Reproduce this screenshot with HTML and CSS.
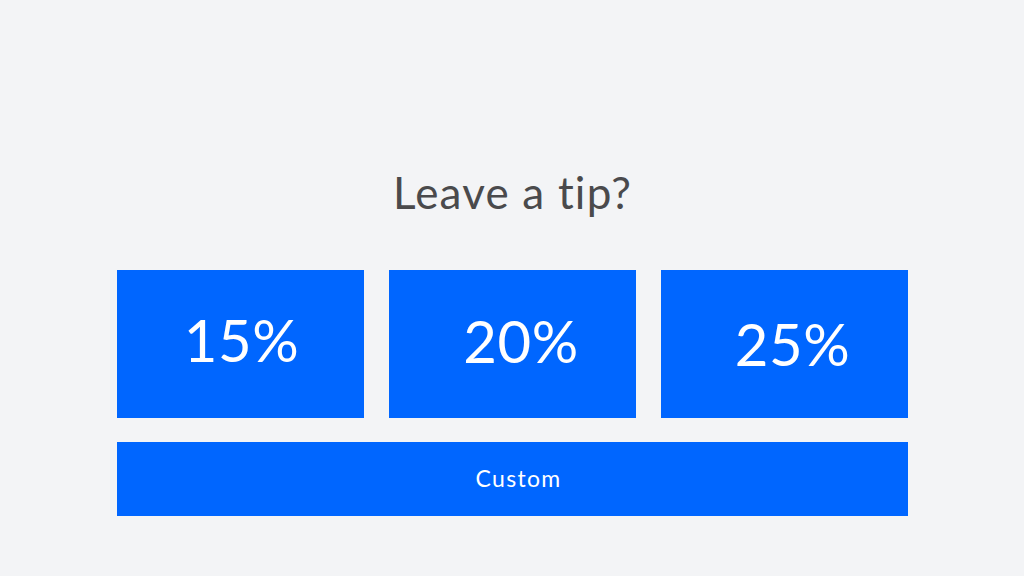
FILE: index.html
```html
<!DOCTYPE html>
<html lang="en">
<head>
<meta charset="utf-8">
<title>Leave a tip?</title>
<link rel="stylesheet" href="styles.css">
</head>
<body>
<main class="tip-panel">
  <h1 class="tip-title">Leave a tip?</h1>
  <div class="tip-grid">
    <button class="tip-btn tip-btn--a">15%</button>
    <button class="tip-btn tip-btn--b">20%</button>
    <button class="tip-btn tip-btn--c">25%</button>
  </div>
  <button class="custom-btn">Custom</button>
</main>
</body>
</html>
```

FILE: styles.css
```css
html, body {
  margin: 0;
  padding: 0;
  background: #f3f4f6;
  width: 1024px;
  height: 576px;
  overflow: hidden;
}

.tip-panel {
  width: 791px;
  margin-left: 117px;
  padding-top: 164px;
  display: flex;
  flex-direction: column;
  font-family: "Lato", "Noto Sans", sans-serif;
}

.tip-title {
  margin: 0;
  text-align: center;
  font-weight: 400;
  font-size: 44px;
  line-height: 56px;
  color: #4a4a4c;
  letter-spacing: 1.2px;
}

.tip-grid {
  margin-top: 50px;
  display: grid;
  grid-template-columns: repeat(3, 247px);
  column-gap: 25px;
}

.tip-btn,
.custom-btn {
  border: none;
  background: #0066ff;
  color: #ffffff;
  font-family: "Lato", "Noto Sans", sans-serif;
  padding: 0;
  display: flex;
  align-items: center;
  justify-content: center;
}

.tip-btn {
  height: 148px;
  font-size: 58px;
  font-weight: 400;
  letter-spacing: 0.5px;
}

.tip-btn--a { padding: 0 0 10px 2px; }
.tip-btn--b { padding: 0 0 8px 17px; }
.tip-btn--c { padding: 0 0 2px 16px; }

.custom-btn {
  margin-top: 24px;
  height: 74px;
  width: 791px;
  font-size: 23px;
  font-weight: 400;
  padding: 0 0 3px 12px;
  letter-spacing: 1.3px;
}
```
